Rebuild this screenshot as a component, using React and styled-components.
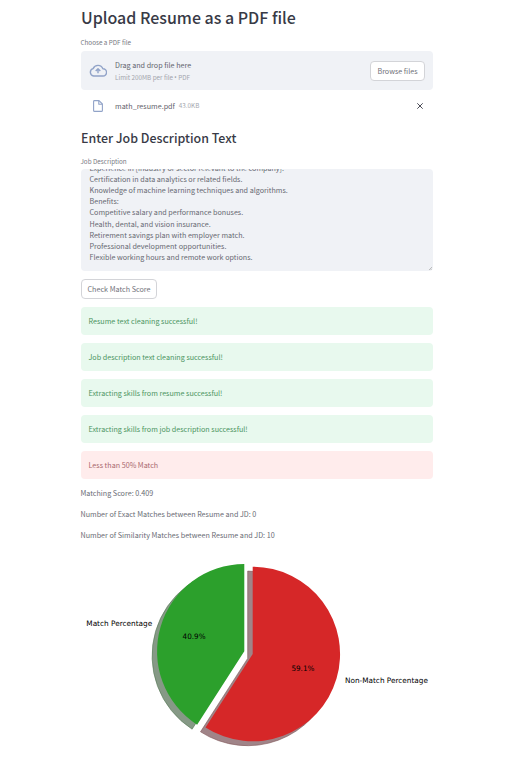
import React from "react";
import styled, { createGlobalStyle } from "styled-components";

const Global = createGlobalStyle`
  * { box-sizing: border-box; }
  body { margin: 0; background: #fff; }
`;

const Page = styled.main`
  width: 514px;
  height: 774px;
  padding: 5px 81px 0;
  overflow: hidden;
  display: flex;
  flex-direction: column;
  align-items: flex-start;
  color: #383a46;
  font-family: "Noto Sans CJK SC", "Noto Sans", sans-serif;
  font-size: 7.18px;
  white-space: nowrap;
`;

const Title = styled.h1`
  margin: 0;
  height: 24px;
  line-height: 24px;
  font-size: 15.97px;
  font-weight: 500;
`;

const Subtitle = styled.h2`
  margin: 11px 0 0;
  height: 20px;
  line-height: 20px;
  font-size: 12.42px;
  font-weight: 500;
`;

const FieldLabel = styled.label`
  margin-top: ${(p) => p.$top}px;
  margin-left: -0.5px;
  height: 10px;
  line-height: 10px;
  font-size: 6.3px;
  color: #777982;
`;

const Dropzone = styled.section`
  width: 352px;
  height: 39px;
  margin-top: 3px;
  padding: 0 8px;
  border-radius: 4px;
  background: #f0f2f6;
  display: flex;
  align-items: center;
`;

const IconCell = styled.span`
  width: 18px;
  margin-right: 8px;
  display: flex;
  justify-content: center;
`;

const DropText = styled.div`
  flex: 1;
  padding-top: 2px;
  display: flex;
  flex-direction: column;
  gap: 2px;
  line-height: 11px;
  color: #62646d;
`;

const Hint = styled.small`
  font-size: 6.3px;
  line-height: 10px;
  color: #a3a5ad;
`;

const Bullet = styled.span`
  font-family: "Noto Sans", sans-serif;
`;

const Button = styled.button`
  width: ${(p) => p.$width}px;
  height: 20px;
  margin: ${(p) => p.$top || 0}px 0 0;
  padding: 0;
  border: 1px solid #d3d4d8;
  border-radius: 4px;
  background: #fff;
  color: #6f7179;
  font: inherit;
  line-height: 18px;
`;

const FileRow = styled.div`
  width: 352px;
  height: 22px;
  margin-top: 5px;
  padding: 0 10px 0 8px;
  display: flex;
  align-items: center;
  color: #5f616a;
`;

const FileName = styled.span`
  flex: 1;
  display: flex;
  gap: 4px;
  align-items: center;
  line-height: 11px;
`;

const TextArea = styled.div`
  flex: none;
  width: 352px;
  height: 102px;
  margin-top: 2px;
  padding: 0 8.5px 7.7px;
  border-radius: 4px;
  background: #f0f2f6;
  overflow: hidden;
  position: relative;
  display: flex;
  flex-direction: column;
  justify-content: flex-end;
  color: #666871;
`;

const Line = styled.span`
  flex: none;
  height: 11.2px;
  line-height: 11.2px;
`;

const Grip = styled.svg`
  position: absolute;
  right: 1px;
  bottom: 1px;
`;

const Alert = styled.div`
  width: 352px;
  height: 28px;
  margin-top: 8px;
  padding: 0 7.5px;
  border-radius: 4px;
  line-height: 28px;
  background: ${(p) => (p.$error ? "#ffecec" : "#e8f9ee")};
  color: ${(p) => (p.$error ? "#a8686d" : "#4a9461")};
`;

const Result = styled.p`
  margin: ${(p) => p.$top || 10}px 0 0 -0.5px;
  height: 11px;
  line-height: 11px;
  color: #696b74;
`;

const Chart = styled.svg`
  margin: 9px 0 0 -81px;
  flex: none;
  font-family: "DejaVu Sans", sans-serif;
  font-size: 7.4px;
`;

const lines = [
  "Experience in [industry or sector relevant to the company].",
  "Certification in data analytics or related fields.",
  "Knowledge of machine learning techniques and algorithms.",
  "Benefits:",
  "Competitive salary and performance bonuses.",
  "Health, dental, and vision insurance.",
  "Retirement savings plan with employer match.",
  "Professional development opportunities.",
  "Flexible working hours and remote work options.",
];

const successes = [
  "Resume text cleaning successful!",
  "Job description text cleaning successful!",
  "Extracting skills from resume successful!",
  "Extracting skills from job description successful!",
];

const GREEN = "M0 0V-87.3A87.3 87.3 0 0 0 -47.2 73.4Z";
const RED = "M0 0V-87.3A87.3 87.3 0 1 1 -47.2 73.4Z";

export default function App() {
  return (
    <Page>
      <Global />
      <Title>Upload Resume as a PDF file</Title>
      <FieldLabel $top={9}>Choose a PDF file</FieldLabel>
      <Dropzone>
        <IconCell>
          <svg width="18" height="13" viewBox="0 0 18 13" fill="none" stroke="#91a3c8" strokeWidth="1.4" strokeLinejoin="round">
            <path d="M4.6 12A3.8 3.8 0 0 1 4.1 4.6A5.3 5.3 0 0 1 13.9 4.8A3.6 3.6 0 0 1 14 12Z" />
            <path d="M9 9.3V5.3M6.7 7L9 4.8L11.3 7" />
          </svg>
        </IconCell>
        <DropText>
          <span>Drag and drop file here</span>
          <Hint>
            Limit 200MB per file <Bullet>•</Bullet> PDF
          </Hint>
        </DropText>
        <Button $width={55}>Browse files</Button>
      </Dropzone>
      <FileRow>
        <IconCell>
          <svg width="10" height="12" viewBox="0 0 10 12" fill="none" stroke="#91a3c8" strokeWidth="1.1" strokeLinejoin="round">
            <path d="M1.5 .6H6L9.4 4V10.4Q9.4 11.4 8.4 11.4H1.6Q.6 11.4 .6 10.4V1.5Q.6 .6 1.5 .6Z" />
            <path d="M5.8 .8V4.2H9.2" />
          </svg>
        </IconCell>
        <FileName>
          math_resume.pdf <Hint>43.0KB</Hint>
        </FileName>
        <svg width="6" height="6" viewBox="0 0 6 6" stroke="#4a4c57" strokeWidth="1">
          <path d="M.3 .3L5.7 5.7M5.7 .3L.3 5.7" />
        </svg>
      </FileRow>
      <Subtitle>Enter Job Description Text</Subtitle>
      <FieldLabel $top={9}>Job Description</FieldLabel>
      <TextArea>
        {lines.map((l) => (
          <Line key={l}>{l}</Line>
        ))}
        <Grip width="3" height="3" viewBox="0 0 3 3" stroke="#999" strokeWidth=".6">
          <path d="M0 3L3 0M1.6 3L3 1.6" />
        </Grip>
      </TextArea>
      <Button $width={76} $top={8}>Check Match Score</Button>
      {successes.map((s) => (
        <Alert key={s}>{s}</Alert>
      ))}
      <Alert $error>Less than 50% Match</Alert>
      <Result $top={9}>Matching Score: 0.409</Result>
      <Result>Number of Exact Matches between Resume and JD: 0</Result>
      <Result>Number of Similarity Matches between Resume and JD: 10</Result>
      <Chart width="514" height="224" viewBox="0 550 514 224">
        <g strokeWidth=".6">
          <path d={GREEN} transform="translate(239.3 655.8)" fill="#869986" stroke="#567856" />
          <path d={RED} transform="translate(247.7 658.4)" fill="#a08488" stroke="#805558" />
        </g>
        <path d={GREEN} transform="translate(244.3 651.3)" fill="#2ca02c" />
        <path d={RED} transform="translate(252.7 654)" fill="#d62728" />
        <text x="86.3" y="626.3" textLength="66" lengthAdjust="spacingAndGlyphs">Match Percentage</text>
        <text x="182.6" y="638.7" textLength="23" lengthAdjust="spacingAndGlyphs">40.9%</text>
        <text x="291.4" y="670.6" textLength="23" lengthAdjust="spacingAndGlyphs">59.1%</text>
        <text x="345" y="682.8" textLength="83" lengthAdjust="spacingAndGlyphs">Non-Match Percentage</text>
      </Chart>
    </Page>
  );
}
